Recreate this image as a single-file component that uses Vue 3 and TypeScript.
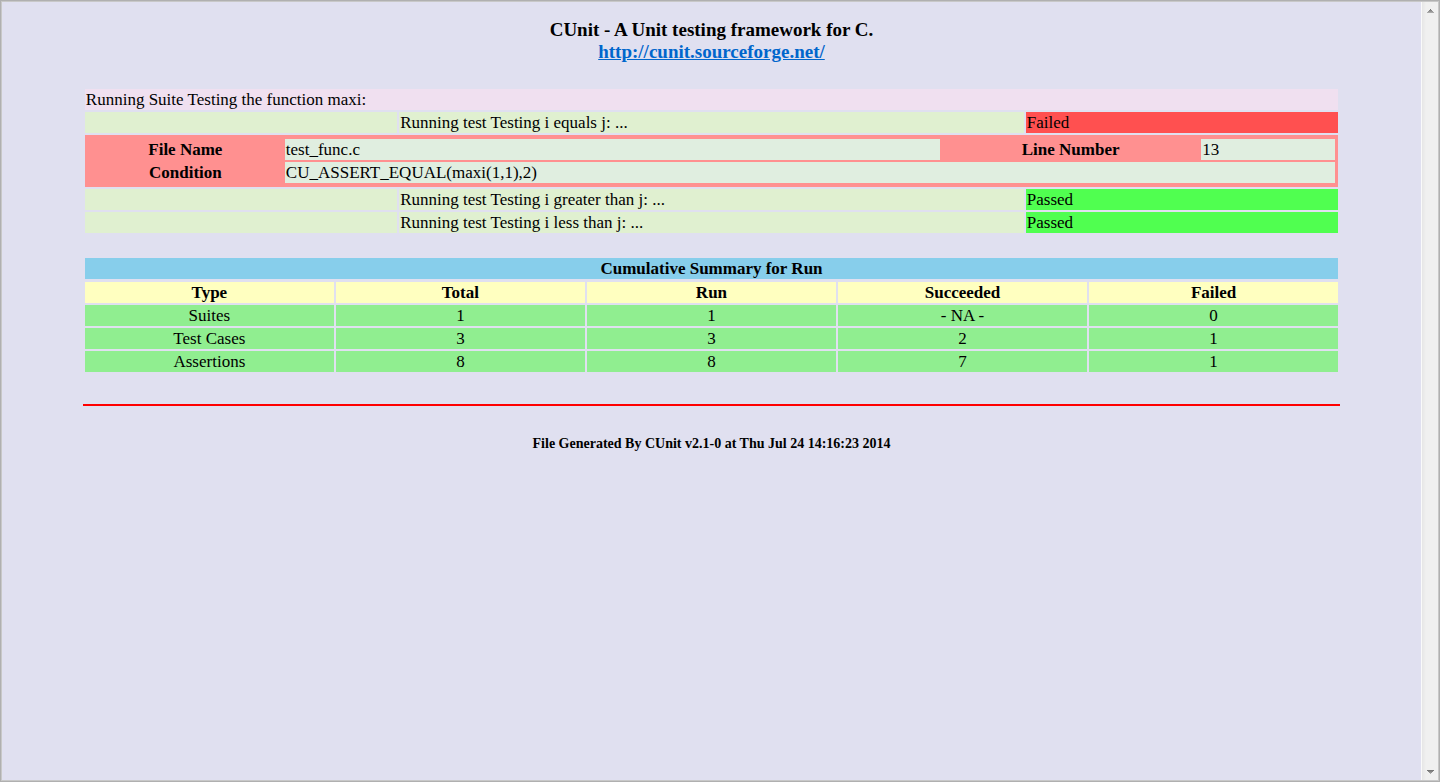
<script setup lang="ts">
interface Failure {
  file: string
  line: number
  condition: string
}

interface TestResult {
  name: string
  passed: boolean
  failure?: Failure
}

interface SummaryRow {
  type: string
  values: string[]
}

const tests: TestResult[] = [
  {
    name: 'Testing i equals j:',
    passed: false,
    failure: { file: 'test_func.c', line: 13, condition: 'CU_ASSERT_EQUAL(maxi(1,1),2)' },
  },
  { name: 'Testing i greater than j:', passed: true },
  { name: 'Testing i less than j:', passed: true },
]

const headings: string[] = ['Type', 'Total', 'Run', 'Succeeded', 'Failed']

const summary: SummaryRow[] = [
  { type: 'Suites', values: ['1', '1', '- NA -', '0'] },
  { type: 'Test Cases', values: ['3', '3', '2', '1'] },
  { type: 'Assertions', values: ['8', '8', '7', '1'] },
]
</script>

<template>
  <div class="window">
    <main class="report">
      <h1 class="title">
        CUnit - A Unit testing framework for C.<br />
        <a href="http://cunit.sourceforge.net/">http://cunit.sourceforge.net/</a>
      </h1>

      <table class="grid results">
        <colgroup>
          <col class="quarter" />
          <col class="half" />
          <col class="quarter" />
        </colgroup>
        <tbody>
          <tr>
            <td colspan="3" class="suite">Running Suite Testing the function maxi:</td>
          </tr>
          <template v-for="test in tests" :key="test.name">
            <tr>
              <td class="test"></td>
              <td class="test">Running test {{ test.name }} ...</td>
              <td :class="test.passed ? 'passed' : 'failed'">{{ test.passed ? 'Passed' : 'Failed' }}</td>
            </tr>
            <tr v-if="test.failure">
              <td colspan="3" class="failure">
                <table class="grid">
                  <colgroup>
                    <col class="label" />
                    <col />
                    <col class="line-label" />
                    <col class="line" />
                  </colgroup>
                  <tbody>
                    <tr>
                      <th scope="row">File Name</th>
                      <td class="detail">{{ test.failure.file }}</td>
                      <th scope="row">Line Number</th>
                      <td class="detail">{{ test.failure.line }}</td>
                    </tr>
                    <tr>
                      <th scope="row">Condition</th>
                      <td colspan="3" class="detail">{{ test.failure.condition }}</td>
                    </tr>
                  </tbody>
                </table>
              </td>
            </tr>
          </template>
        </tbody>
      </table>

      <table class="grid summary">
        <caption>Cumulative Summary for Run</caption>
        <thead>
          <tr>
            <th v-for="heading in headings" :key="heading" scope="col">{{ heading }}</th>
          </tr>
        </thead>
        <tbody>
          <tr v-for="row in summary" :key="row.type">
            <td>{{ row.type }}</td>
            <td v-for="(value, index) in row.values" :key="index">{{ value }}</td>
          </tr>
        </tbody>
      </table>

      <hr class="rule" />
      <footer class="footer">File Generated By CUnit v2.1-0 at Thu Jul 24 14:16:23 2014</footer>
    </main>

    <div class="scrollbar">
      <button type="button" aria-label="Scroll up">
        <svg width="7" height="4" viewBox="0 0 7 4" shape-rendering="crispEdges">
          <path d="M3 0h1v1H3z" fill="#777" />
          <path d="M2 1h3v1H2z" fill="#858585" />
          <path d="M1 2h5v1H1z" fill="#969696" />
          <path d="M0 3h7v1H0z" fill="#aaa" />
        </svg>
      </button>
      <button type="button" aria-label="Scroll down">
        <svg width="7" height="4" viewBox="0 0 7 4" shape-rendering="crispEdges">
          <path d="M0 0h7v1H0z" fill="#777" />
          <path d="M1 1h5v1H1z" fill="#858585" />
          <path d="M2 2h3v1H2z" fill="#969696" />
          <path d="M3 3h1v1H3z" fill="#aaa" />
        </svg>
      </button>
    </div>
  </div>
</template>

<style>
body {
  margin: 0;
  background: #e0e0f0;
}
</style>

<style scoped>
.window {
  box-sizing: border-box;
  display: flex;
  min-height: 100vh;
  border: 1px solid #b0b0b0;
  outline: 1px solid #c8c8c8;
  outline-offset: -2px;
  background: #e0e0f0;
  color: #000;
  font: 17px/19px "Liberation Serif", "Times New Roman", serif;
}

.report {
  flex: 1;
  display: flex;
  flex-direction: column;
  align-items: center;
  padding: 18px 10px 18px 12px;
}

.title {
  margin: 0;
  font-size: 19px;
  line-height: 22px;
  text-align: center;
}

.title a {
  color: #0066cc;
}

.grid {
  width: 100%;
  table-layout: fixed;
  border-collapse: separate;
  border-spacing: 2px;
}

.grid td,
.grid th {
  padding: 1px;
}

.results {
  width: 90%;
  margin-top: 24px;
}

.quarter {
  width: 25%;
}

.half {
  width: 50%;
}

.suite {
  background: #f0e0f0;
}

.test {
  background: #e0f0d0;
}

.failed {
  background: #ff5050;
}

.passed {
  background: #50ff50;
}

.results .failure {
  padding: 2px 1px;
  background: #ff9090;
}

.label {
  width: 195px;
}

.line-label {
  width: 257px;
}

.line {
  width: 134px;
}

.detail {
  background: #e0eee0;
}

.summary {
  width: 90%;
  margin-top: 23px;
  text-align: center;
}

.summary caption {
  margin: 0 2px 1px;
  padding: 1px;
  background: #87ceeb;
  font-weight: bold;
}

.summary th {
  background: #ffffc0;
}

.summary td {
  background: #90ee90;
}

.rule {
  width: 90%;
  height: 2px;
  margin: 30px 0 28px;
  border: 0;
  background: #ff0000;
}

.footer {
  font-size: 14px;
  font-weight: bold;
  text-align: center;
}

.scrollbar {
  box-sizing: border-box;
  display: flex;
  flex-direction: column;
  justify-content: space-between;
  width: 17px;
  margin: 1px;
  border-left: 1px solid #fafafa;
  background: linear-gradient(to right, #e6e6e6, #f0f0f0 4px);
}

.scrollbar button {
  display: flex;
  align-items: center;
  justify-content: center;
  height: 17px;
  padding: 0;
  border: 0;
  background: none;
}
</style>
